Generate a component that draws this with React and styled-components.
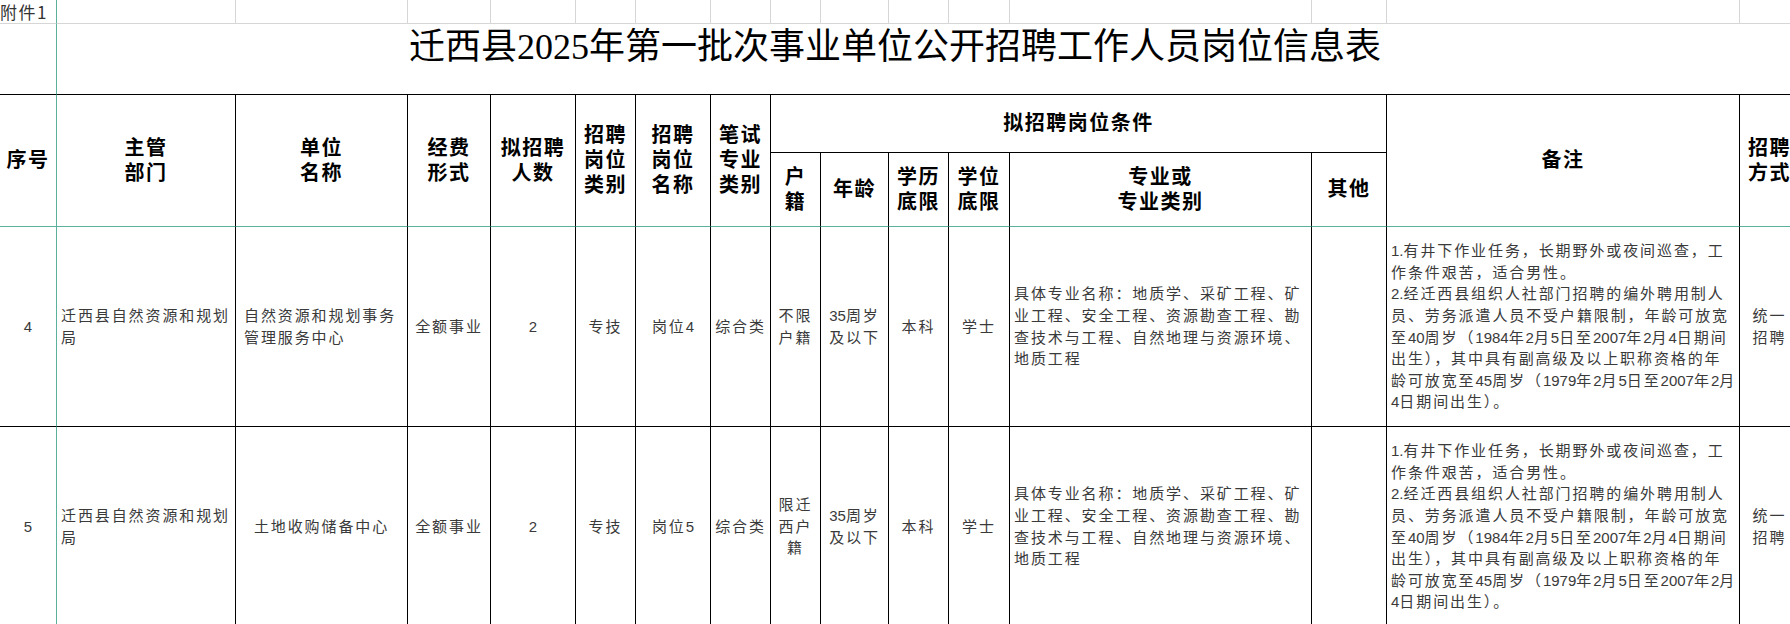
import React from "react";
import styled, { createGlobalStyle } from "styled-components";

const GREEN = "#5bb19b";
const GRID = "#d6d6d6";
const INK = "#000";

const cols = [57, 179, 172, 83, 85, 60, 75, 60, 50, 68, 60, 61, 302, 75, 353, 60];

const remark = [
  "1.有井下作业任务，长期野外或夜间巡查，工",
  "作条件艰苦，适合男性。",
  "2.经迁西县组织人社部门招聘的编外聘用制人",
  "员、劳务派遣人员不受户籍限制，年龄可放宽",
  "至40周岁（1984年2月5日至2007年2月4日期间",
  "出生），其中具有副高级及以上职称资格的年",
  "龄可放宽至45周岁（1979年2月5日至2007年2月",
  "4日期间出生）。",
];

const major = [
  "具体专业名称：地质学、采矿工程、矿",
  "业工程、安全工程、资源勘查工程、勘",
  "查技术与工程、自然地理与资源环境、",
  "地质工程",
];

const rows = [
  {
    id: 4,
    dept: ["迁西县自然资源和规划", "局"],
    unit: ["自然资源和规划事务", "管理服务中心"],
    unitLeft: true,
    post: "岗位4",
    huji: ["不限", "户籍"],
  },
  {
    id: 5,
    dept: ["迁西县自然资源和规划", "局"],
    unit: ["土地收购储备中心"],
    unitLeft: false,
    post: "岗位5",
    huji: ["限迁", "西户", "籍"],
  },
];

const GlobalStyle = createGlobalStyle`
  html, body {
    margin: 0;
    padding: 0;
    background: #fff;
    overflow: hidden;
  }
  body {
    font-family: "Liberation Sans", "Noto Sans CJK SC", sans-serif;
  }
`;

const Page = styled.div`
  width: 1790px;
  height: 624px;
  overflow: hidden;
  background: #fff;
`;

const Sheet = styled.table`
  width: 1800px;
  table-layout: fixed;
  border-collapse: separate;
  border-spacing: 0;
`;

const Row = styled.tr`
  height: ${(p) => p.$h}px;
`;

const Cell = styled.td`
  padding: 0;
  border-right: 1px solid ${(p) => p.$right || INK};
  border-bottom: 1px solid ${(p) => p.$bottom || INK};
  vertical-align: middle;
  overflow: hidden;
`;

const NoteCell = styled(Cell)`
  border-right-color: ${GREEN};
  border-bottom-color: ${GRID};
  font-family: "Noto Sans CJK SC", sans-serif;
  font-size: 17px;
  letter-spacing: 1.5px;
  color: #333;
  line-height: 23px;
  white-space: nowrap;
`;

const GridCell = styled(Cell)`
  border-right-color: ${GRID};
  border-bottom-color: ${GRID};
`;

const TitleCell = styled(Cell)`
  border-right: none;
  vertical-align: top;
  padding: 2px 67px 0 0;
  text-align: center;
  font-family: "Liberation Serif", "Noto Sans CJK SC", serif;
  font-size: 36px;
  line-height: 43px;
  color: #000;
  white-space: nowrap;
`;

const HeadCell = styled(Cell)`
  text-align: center;
  font-family: "Liberation Sans", "Noto Sans CJK SC", sans-serif;
  font-weight: 700;
  font-size: 20px;
  letter-spacing: 1.5px;
  line-height: 25px;
  color: #000;
  white-space: nowrap;
`;

const DataCell = styled(Cell)`
  text-align: ${(p) => (p.$left ? "left" : "center")};
  padding-left: ${(p) => p.$pad || 0}px;
  font-family: "Liberation Sans", "Noto Sans CJK SC", sans-serif;
  font-size: 15px;
  letter-spacing: 1.9px;
  line-height: 21.6px;
  color: #3a3a3a;
  white-space: nowrap;
`;

const Line = styled.div`
  display: block;
`;

const Num = styled.span`
  letter-spacing: 0;
`;

// digits in the sheet are half-width and carry no extra tracking
const Text = ({ value }) =>
  String(value)
    .split(/([0-9.]+)/)
    .filter(Boolean)
    .map((part, i) =>
      /^[0-9.]+$/.test(part) ? <Num key={i}>{part}</Num> : <span key={i}>{part}</span>
    );

const Lines = ({ items }) =>
  items.map((t, i) => (
    <Line key={i}>
      <Text value={t} />
    </Line>
  ));

const App = () => {
  return (
    <Page>
      <GlobalStyle />
      <Sheet>
        <colgroup>
          {cols.map((w, i) => (
            <col key={i} style={{ width: w }} />
          ))}
        </colgroup>
        <tbody>
          <Row $h={24}>
            <NoteCell>附件1</NoteCell>
            {cols.slice(1).map((w, i) => (
              <GridCell key={i} />
            ))}
          </Row>
          <Row $h={71}>
            <Cell $right={GREEN} />
            <TitleCell colSpan={15}>
              迁西县2025年第一批次事业单位公开招聘工作人员岗位信息表
            </TitleCell>
          </Row>
          <Row $h={58}>
            <HeadCell rowSpan={2} $right={GREEN} $bottom={GREEN}>
              序号
            </HeadCell>
            <HeadCell rowSpan={2} $bottom={GREEN}>
              <Lines items={["主管", "部门"]} />
            </HeadCell>
            <HeadCell rowSpan={2} $bottom={GREEN}>
              <Lines items={["单位", "名称"]} />
            </HeadCell>
            <HeadCell rowSpan={2} $bottom={GREEN}>
              <Lines items={["经费", "形式"]} />
            </HeadCell>
            <HeadCell rowSpan={2} $bottom={GREEN}>
              <Lines items={["拟招聘", "人数"]} />
            </HeadCell>
            <HeadCell rowSpan={2} $bottom={GREEN}>
              <Lines items={["招聘", "岗位", "类别"]} />
            </HeadCell>
            <HeadCell rowSpan={2} $bottom={GREEN}>
              <Lines items={["招聘", "岗位", "名称"]} />
            </HeadCell>
            <HeadCell rowSpan={2} $bottom={GREEN}>
              <Lines items={["笔试", "专业", "类别"]} />
            </HeadCell>
            <HeadCell colSpan={6}>拟招聘岗位条件</HeadCell>
            <HeadCell rowSpan={2} $bottom={GREEN}>
              备注
            </HeadCell>
            <HeadCell rowSpan={2} $bottom={GREEN}>
              <Lines items={["招聘", "方式"]} />
            </HeadCell>
          </Row>
          <Row $h={74}>
            <HeadCell $bottom={GREEN}>
              <Lines items={["户", "籍"]} />
            </HeadCell>
            <HeadCell $bottom={GREEN}>年龄</HeadCell>
            <HeadCell $bottom={GREEN}>
              <Lines items={["学历", "底限"]} />
            </HeadCell>
            <HeadCell $bottom={GREEN}>
              <Lines items={["学位", "底限"]} />
            </HeadCell>
            <HeadCell $bottom={GREEN}>
              <Lines items={["专业或", "专业类别"]} />
            </HeadCell>
            <HeadCell $bottom={GREEN}>其他</HeadCell>
          </Row>
          {rows.map((r) => (
            <Row key={r.id} $h={200}>
              <DataCell $right={GREEN}>
                <Text value={r.id} />
              </DataCell>
              <DataCell $left $pad={4}>
                <Lines items={r.dept} />
              </DataCell>
              <DataCell $left={r.unitLeft} $pad={r.unitLeft ? 8 : 0}>
                <Lines items={r.unit} />
              </DataCell>
              <DataCell>全额事业</DataCell>
              <DataCell>
                <Text value="2" />
              </DataCell>
              <DataCell>专技</DataCell>
              <DataCell>
                <Text value={r.post} />
              </DataCell>
              <DataCell>综合类</DataCell>
              <DataCell>
                <Lines items={r.huji} />
              </DataCell>
              <DataCell>
                <Lines items={["35周岁", "及以下"]} />
              </DataCell>
              <DataCell>本科</DataCell>
              <DataCell>学士</DataCell>
              <DataCell $left $pad={4}>
                <Lines items={major} />
              </DataCell>
              <DataCell />
              <DataCell $left $pad={4}>
                <Lines items={remark} />
              </DataCell>
              <DataCell>
                <Lines items={["统一", "招聘"]} />
              </DataCell>
            </Row>
          ))}
        </tbody>
      </Sheet>
    </Page>
  );
};

export default App;
